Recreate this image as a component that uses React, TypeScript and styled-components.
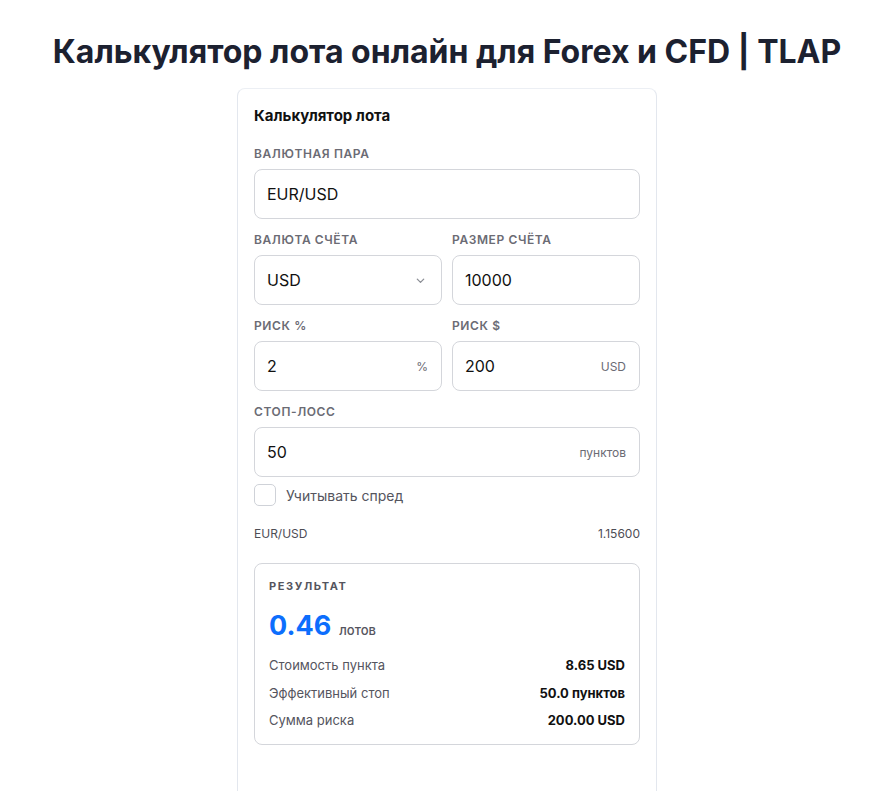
import styled, { createGlobalStyle } from "styled-components";

const GlobalStyles = createGlobalStyle`
  * {
    box-sizing: border-box;
  }
  body {
    margin: 0;
    background: #ffffff;
    font-family: Inter, "Noto Sans", sans-serif;
    color: #111827;
  }
`;

const Page = styled.div`
  padding: 0 0 0 17px;
  display: flex;
  flex-direction: column;
  align-items: center;
`;

const Title = styled.h1`
  margin: 33px 0 17px;
  font-family: Inter, "Noto Sans", sans-serif;
  font-size: 32px;
  font-weight: 700;
  line-height: 38px;
  color: #1c2130;
  text-align: center;
  white-space: nowrap;
`;

const Card = styled.div`
  width: 420px;
  min-height: 760px;
  border: 1px solid #e3e7ee;
  border-top-color: #eceff4;
  border-radius: 8px;
  padding: 17px 16px 40px;
  display: flex;
  flex-direction: column;
`;

const CardTitle = styled.h2`
  margin: 0 0 20px;
  font-size: 15px;
  line-height: 20px;
  font-weight: 700;
  color: #111111;
`;

const Fields = styled.div`
  display: flex;
  flex-direction: column;
  gap: 13px;
`;

const Row = styled.div`
  display: grid;
  grid-template-columns: 1fr 1fr;
  gap: 10px;
`;

const Field = styled.div`
  display: flex;
  flex-direction: column;
  gap: 7px;
`;

const Label = styled.label`
  font-size: 12px;
  line-height: 16px;
  font-weight: 600;
  letter-spacing: 0.6px;
  text-transform: uppercase;
  color: #6b6b74;
`;

const InputBox = styled.div`
  height: 50px;
  border: 1px solid #d4d6db;
  border-radius: 8px;
  padding: 0 13px 0 12px;
  display: flex;
  align-items: center;
  justify-content: space-between;
  background: #ffffff;
`;

const Value = styled.span`
  font-size: 16px;
  color: #111111;
`;

const Suffix = styled.span`
  font-size: 12px;
  color: #6b6b74;
`;

const Chevron = styled.svg`
  width: 11px;
  height: 11px;
  margin-right: 2px;
`;

const CheckRow = styled.div`
  margin-top: 7px;
  display: flex;
  align-items: center;
  gap: 10px;
  font-size: 14px;
  color: #55555e;
`;

const Checkbox = styled.span`
  width: 22px;
  height: 22px;
  border: 1px solid #cfd2d8;
  border-radius: 5px;
  display: inline-block;
`;

const RateRow = styled.div`
  margin-top: 20px;
  display: flex;
  justify-content: space-between;
  font-size: 12px;
  line-height: 16px;
  color: #4d4d55;
`;

const Result = styled.div`
  margin-top: 21px;
  border: 1px solid #d4d6db;
  border-radius: 8px;
  padding: 15px 14px 15px;
  display: flex;
  flex-direction: column;
`;

const ResultLabel = styled.div`
  font-size: 11px;
  line-height: 14px;
  font-weight: 700;
  letter-spacing: 1.6px;
  color: #55555e;
`;

const Lots = styled.div`
  margin-top: 16px;
  display: flex;
  align-items: baseline;
  gap: 8px;
`;

const LotsValue = styled.span`
  font-size: 27px;
  line-height: 34px;
  font-weight: 700;
  color: #0d6efd;
`;

const LotsUnit = styled.span`
  font-size: 13px;
  font-weight: 500;
  color: #55555e;
`;

const Stats = styled.div`
  margin-top: 13px;
  display: flex;
  flex-direction: column;
  gap: 9.5px;
`;

const Stat = styled.div`
  display: flex;
  justify-content: space-between;
  font-size: 13px;
  line-height: 18px;
`;

const StatName = styled.span`
  color: #55555e;
`;

const StatValue = styled.span`
  font-weight: 700;
  color: #111111;
`;

const stats = [
  ["Стоимость пункта", "8.65 USD"],
  ["Эффективный стоп", "50.0 пунктов"],
  ["Сумма риска", "200.00 USD"],
];

function App() {
  return (
    <Page>
      <GlobalStyles />
      <Title>Калькулятор лота онлайн для Forex и CFD | TLAP</Title>
      <Card>
        <CardTitle>Калькулятор лота</CardTitle>
        <Fields>
          <Field>
            <Label>Валютная пара</Label>
            <InputBox>
              <Value>EUR/USD</Value>
            </InputBox>
          </Field>
          <Row>
            <Field>
              <Label>Валюта счёта</Label>
              <InputBox>
                <Value>USD</Value>
                <Chevron viewBox="0 0 12 12" fill="none">
                  <path
                    d="M2.5 4.5 6 8l3.5-3.5"
                    stroke="#8a8d94"
                    strokeWidth="1.4"
                    strokeLinecap="round"
                    strokeLinejoin="round"
                  />
                </Chevron>
              </InputBox>
            </Field>
            <Field>
              <Label>Размер счёта</Label>
              <InputBox>
                <Value>10000</Value>
              </InputBox>
            </Field>
          </Row>
          <Row>
            <Field>
              <Label>Риск %</Label>
              <InputBox>
                <Value>2</Value>
                <Suffix>%</Suffix>
              </InputBox>
            </Field>
            <Field>
              <Label>Риск $</Label>
              <InputBox>
                <Value>200</Value>
                <Suffix>USD</Suffix>
              </InputBox>
            </Field>
          </Row>
          <Field>
            <Label>Стоп-лосс</Label>
            <InputBox>
              <Value>50</Value>
              <Suffix>пунктов</Suffix>
            </InputBox>
          </Field>
        </Fields>
        <CheckRow>
          <Checkbox />
          Учитывать спред
        </CheckRow>
        <RateRow>
          <span>EUR/USD</span>
          <span>1.15600</span>
        </RateRow>
        <Result>
          <ResultLabel>РЕЗУЛЬТАТ</ResultLabel>
          <Lots>
            <LotsValue>0.46</LotsValue>
            <LotsUnit>лотов</LotsUnit>
          </Lots>
          <Stats>
            {stats.map(([name, value]) => (
              <Stat key={name}>
                <StatName>{name}</StatName>
                <StatValue>{value}</StatValue>
              </Stat>
            ))}
          </Stats>
        </Result>
      </Card>
    </Page>
  );
}

export default App;
